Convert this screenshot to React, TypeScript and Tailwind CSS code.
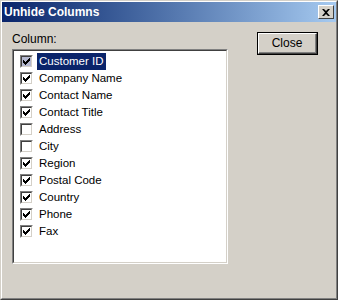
const columns = [
  { name: "Customer ID", checked: true },
  { name: "Company Name", checked: true },
  { name: "Contact Name", checked: true },
  { name: "Contact Title", checked: true },
  { name: "Address", checked: false },
  { name: "City", checked: false },
  { name: "Region", checked: true },
  { name: "Postal Code", checked: true },
  { name: "Country", checked: true },
  { name: "Phone", checked: true },
  { name: "Fax", checked: true },
];

const CheckBox = ({ checked, focused }: { checked: boolean; focused?: boolean }) => (
  <div className="w-[13px] h-[13px] border border-t-[#808080] border-l-[#808080] border-b-white border-r-white shrink-0">
    <div
      className={`w-full h-full border border-t-[#404040] border-l-[#404040] border-b-[#d4d0c8] border-r-[#d4d0c8] flex items-center justify-center ${
        focused ? "bg-[#b4b8d0]" : "bg-white"
      }`}
    >
      {checked && (
        <svg width="7" height="7" viewBox="0 0 7 7">
          <path d="M0 2h1v1h1v1h1V3h1V2h1V1h1V0h1v3H6v1H5v1H4v1H3v1H2V6H1V5H0z" fill="#000" />
        </svg>
      )}
    </div>
  </div>
);

const App = () => {
  return (
    <div
      className="w-[338px] h-[300px] border border-t-[#d4d0c8] border-l-[#d4d0c8] border-b-[#404040] border-r-[#404040] bg-[#d4d0c8]"
      style={{ fontFamily: '"Liberation Sans", Arial, sans-serif' }}
    >
      <div className="h-full border border-t-white border-l-white border-b-[#808080] border-r-[#808080] flex flex-col">
        {/* Title bar */}
        <div className="h-[20px] flex items-center justify-between bg-gradient-to-r from-[#0a246a] to-[#a6caf0] pl-[2px] pr-[2px]">
          <span className="text-white font-bold text-[12px] leading-none">Unhide Columns</span>
          <div className="w-[16px] h-[14px] border border-t-white border-l-white border-b-[#404040] border-r-[#404040] bg-[#d4d0c8] flex items-center justify-center">
            <svg width="8" height="7" viewBox="0 0 8 7">
              <path d="M0 0h2l2 2 2-2h2L5 3.5 8 7H6L4 5 2 7H0l3-3.5z" fill="#000" />
            </svg>
          </div>
        </div>

        {/* Body */}
        <div className="flex flex-1 pl-[10px] pt-[10px]">
          <div className="flex flex-col">
            <span className="text-[12px] leading-[14px] text-black">Column:</span>
            <div className="mt-[3px] w-[216px] h-[215px] border border-t-[#808080] border-l-[#808080] border-b-white border-r-white">
              <div className="w-full h-full border border-t-[#404040] border-l-[#404040] border-b-[#d4d0c8] border-r-[#d4d0c8] bg-white pt-[2px] pl-[6px]">
                {columns.map((c, i) => (
                  <div key={c.name} className="h-[17px] flex items-center">
                    <CheckBox checked={c.checked} focused={i === 0} />
                    <span
                      className={`ml-[4px] px-[2px] text-[11.5px] leading-[17px] ${
                        i === 0 ? "bg-[#0a246a] text-white" : "text-black"
                      }`}
                    >
                      {c.name}
                    </span>
                  </div>
                ))}
              </div>
            </div>
          </div>
          <div className="ml-[29px]">
            <div className="w-[61px] h-[23px] border border-black">
              <div className="w-full h-full border border-t-white border-l-white border-b-[#404040] border-r-[#404040]">
                <div className="w-full h-full border-b border-r border-[#808080] flex items-center justify-center text-[12px] text-black">
                  Close
                </div>
              </div>
            </div>
          </div>
        </div>
      </div>
    </div>
  );
};

export default App;
